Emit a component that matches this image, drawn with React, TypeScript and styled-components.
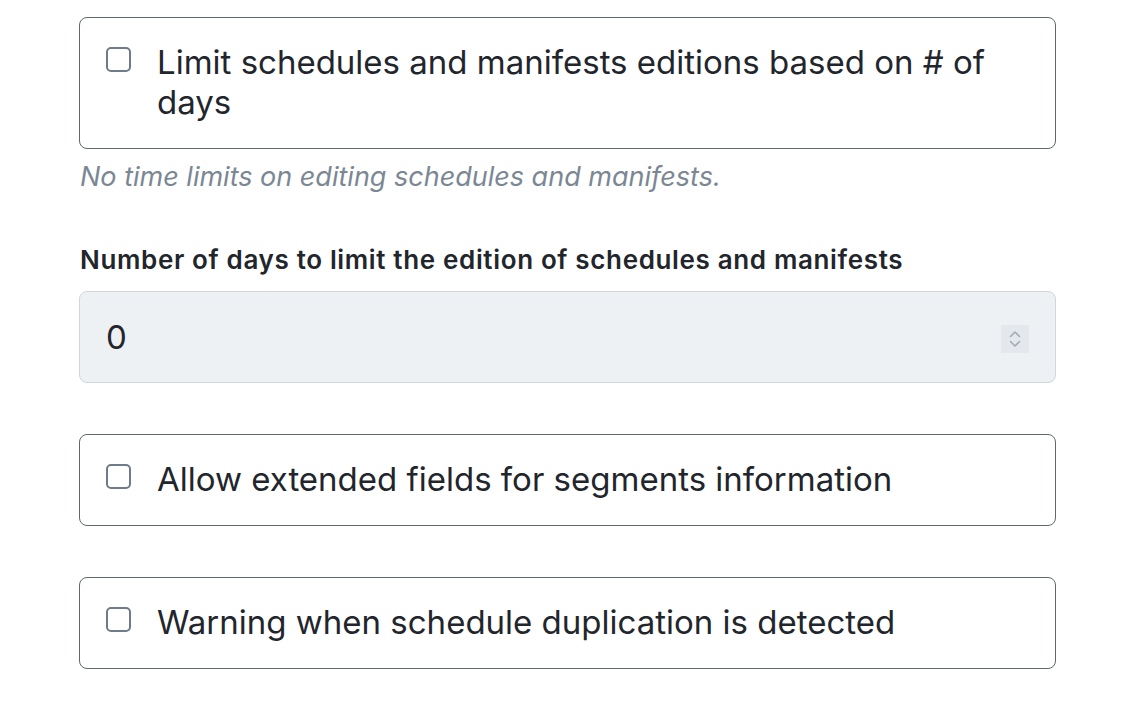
import styled, { createGlobalStyle } from "styled-components";

const GlobalStyle = createGlobalStyle`
  body {
    margin: 0;
    background: #ffffff;
    font-family: Inter, "Noto Sans", sans-serif;
    color: #22262c;
  }
`;

const Page = styled.div`
  width: 977px;
  padding: 17px 0 0 79px;
  display: flex;
  flex-direction: column;
`;

const CheckCard = styled.label<{ $mt?: number }>`
  display: flex;
  align-items: flex-start;
  gap: 26px;
  padding: 24px 26px 26px;
  margin-top: ${({ $mt }) => $mt ?? 0}px;
  border: 1px solid #5f6771;
  border-radius: 8px;
  font-size: 33px;
  line-height: 40px;
  color: #22262c;
`;

const Box = styled.span`
  flex: none;
  width: 25px;
  height: 25px;
  margin-top: 5px;
  box-sizing: border-box;
  border: 2px solid #6f7b8a;
  border-radius: 5px;
  background: #fff;
`;

const Hint = styled.p`
  margin: 10px 0 0 1px;
  font-size: 27px;
  line-height: 36px;
  font-style: italic;
  color: #7b8794;
`;

const FieldLabel = styled.div`
  margin: 48px 0 0 1px;
  font-size: 26px;
  line-height: 34px;
  font-weight: 600;
  color: #22262c;
  letter-spacing: 0.65px;
`;

const NumberField = styled.div`
  margin-top: 14px;
  height: 92px;
  box-sizing: border-box;
  display: flex;
  align-items: center;
  justify-content: space-between;
  padding: 0 26px 0 26px;
  background: #eef1f4;
  border: 1px solid #d0d6dc;
  border-radius: 8px;
  font-size: 33px;
  color: #22262c;
`;

const Spinner = styled.span`
  width: 28px;
  height: 28px;
  margin-top: 4px;
  display: flex;
  align-items: center;
  justify-content: center;
  background: #e4e7eb;
`;

export default function App() {
  return (
    <>
      <GlobalStyle />
      <Page>
        <CheckCard>
          <Box />
          <span>Limit schedules and manifests editions based on # of days</span>
        </CheckCard>
        <Hint>No time limits on editing schedules and manifests.</Hint>
        <FieldLabel>Number of days to limit the edition of schedules and manifests</FieldLabel>
        <NumberField>
          <span>0</span>
          <Spinner>
            <svg width="16" height="22" viewBox="0 0 16 22" fill="none" stroke="#a3abb6" strokeWidth="1.6" strokeLinecap="round" strokeLinejoin="round">
              <path d="M3.5 8.5 L8 4 L12.5 8.5" />
              <path d="M3.5 13.5 L8 18 L12.5 13.5" />
            </svg>
          </Spinner>
        </NumberField>
        <CheckCard $mt={51}>
          <Box />
          <span>Allow extended fields for segments information</span>
        </CheckCard>
        <CheckCard $mt={51}>
          <Box />
          <span>Warning when schedule duplication is detected</span>
        </CheckCard>
      </Page>
    </>
  );
}
